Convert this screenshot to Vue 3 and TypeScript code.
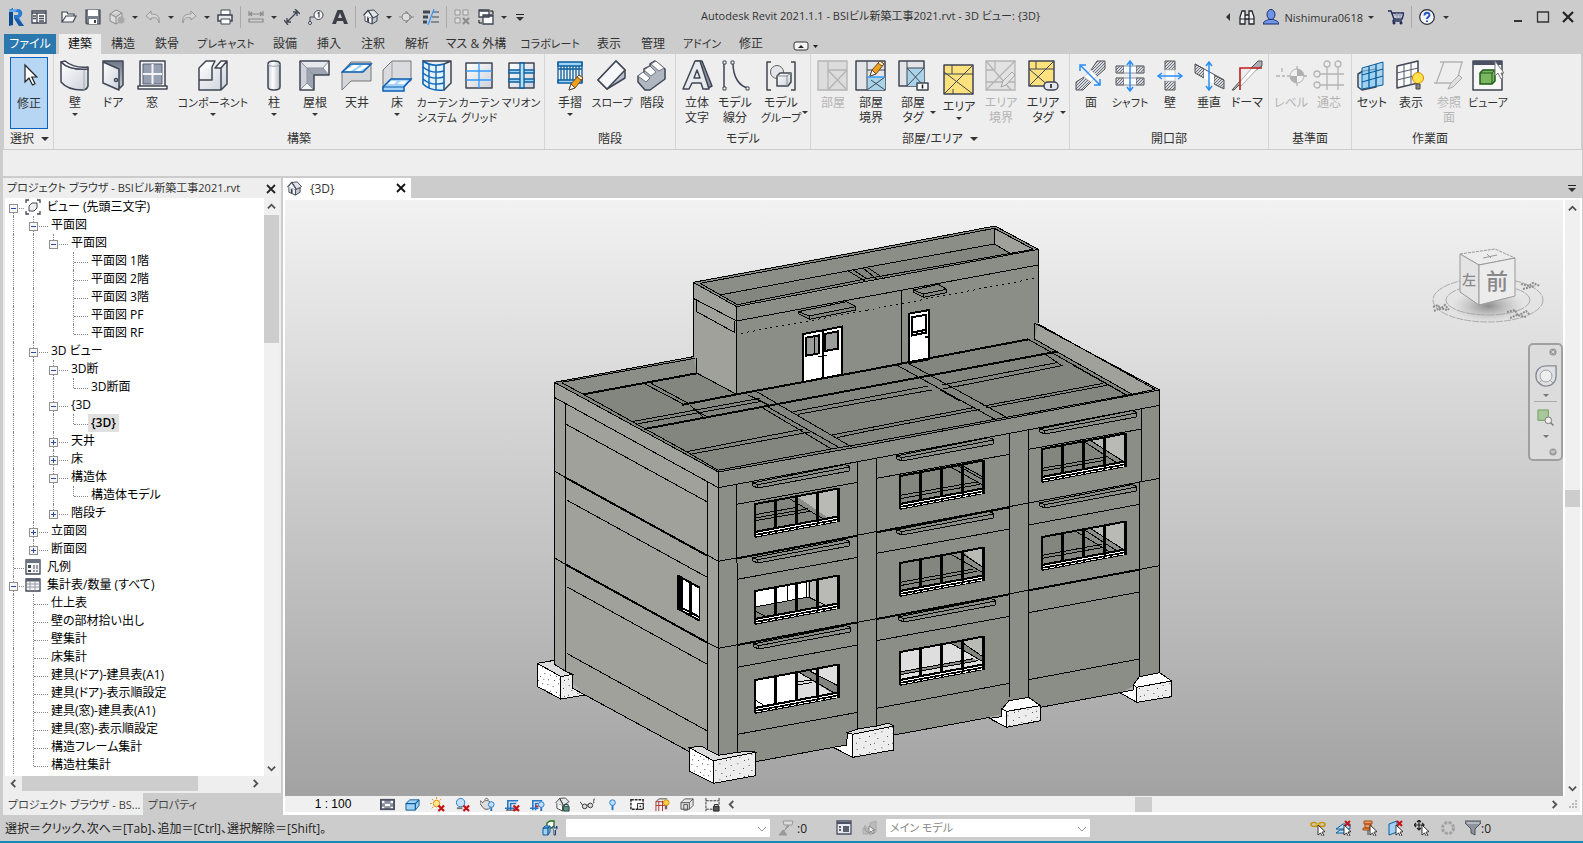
<script setup lang="ts">
import { ref } from 'vue'

interface Tool {
  lines: string[]
  icon: string
  size: string
  arrow?: 'below' | 'side'
  disabled?: boolean
  low?: boolean
}
interface Panel {
  title: string
  pad: string
  more?: boolean
  tools: Tool[]
}
interface Row {
  guides: string
  text: string
  icon?: string
  selected?: boolean
}

const O = 'stroke="#3f4654" stroke-width="1.5" stroke-linejoin="round"'
const G = 'stroke="#b4b4b4" stroke-width="1.3" fill="none"'
const B = 'stroke="#0b5f9e" stroke-width="1.3" fill="none"'
const pencil =
  '<path d="M15 30l2-6L25 15l4 3-8 10z" fill="#f0a020" stroke="#7a4a12"/><path d="M15 30l2-6 4 4z" fill="#fff" stroke="#5a4a3a"/><path d="M25 15l4 3-2 2-4-3z" fill="#fff3d0" stroke="#7a4a12"/>'
const cross =
  '<path d="M9 9l6 6M15 9l-6 6" stroke="#c41418" stroke-width="2.4"/>'
const cursor =
  '<path d="M8 5v10l2.500-2 2 3.500 1.500-1-2-3.300 3-.6z" fill="#fff" stroke="#222" stroke-width=".9"/>'
const bulb =
  '<circle cx="12" cy="8" r="3" fill="#bfe0ff" stroke="#2277c8"/><path d="M12 11v4" stroke="#2277c8" stroke-width="2"/>'

const icons: Record<string, string> = {
  arrow: `<path d="M12 4v17l4-4 3.500 7 2.500-1.200-3.200-6.800h5z" fill="#fff" stroke="#222" stroke-width="1.200"/>`,
  wall: `<path d="M2 2c6 6 15 8 27 7v17c-1 4-4 4-6 4-9 0-16-2-21-8z" fill="url(#gw)" ${O}/><path d="M2 2l4-1c6 5 13 7 23 6v2c-12 1-21-1-27-7z" fill="#f8f8f8" ${O}/><path d="M25 10v20" fill="none" stroke="#a4a9b3"/>`,
  door: `<path d="M6 1h20v24l-3 3z" fill="url(#gd)" ${O}/><path d="M6 2l16 7v21L6 23z" fill="url(#gw)" ${O}/><circle cx="19" cy="20" r="1.500" fill="#fff" ${O}/>`,
  window: `<path d="M4 1h25v26H4z" fill="#f2f2f4" ${O}/><path d="M7 4h19v20H7z" fill="#97a0b2" stroke="#596172"/><path d="M16.500 4v20M7 14h19" stroke="#f4f4f6" stroke-width="2"/><path d="M2 26h29v3H2z" fill="#fff" ${O}/>`,
  component: `<path d="M2 8l7-7h21v23l-6 6H2z" fill="url(#gw)"/><path d="M2 8l7-7h9l-3 7zM17 8l7-7h6l-6 7z" fill="#fafafa"/><path d="M2 8l7-7h9l-3 6v13H2zM2 20v10h22V8h-6l6-7h6v23l-6 6M24 8l6-7" fill="none" ${O}/>`,
  column: `<path d="M10 4c0-4 12-4 12 0v23c0 4-12 4-12 0z" fill="url(#gc)" ${O}/><path d="M10 4c0 3 12 3 12 0" fill="none" stroke="#9aa1ad"/>`,
  roof: `<path d="M1 1h29v14H15v15H1z" fill="#9ea4b0"/><path d="M1 1h29l-6 7H8z" fill="#e6e8ec"/><path d="M1 1l7 7v15l-7 7z" fill="#cdd1d8"/><path d="M24 8l6-7v14zM8 23l7 7H1z" fill="#f4f5f7"/><path d="M1 1l7 7h16l6-7M24 8l6 7M8 8v15l-7 7M8 23l7 7M8 8l7 7" fill="none" stroke="#8d93a0"/><path d="M1 1h29v14H15v15H1z" fill="none" ${O}/>`,
  ceiling: `<path d="M1 12v18l9-9h20V2H10z" fill="#d4d6da" stroke="#777"/><path d="M10 4h20l-8 8H1z" fill="#a5d4fb" stroke="#0b5fb0" stroke-width="1.500"/><path d="M12 5h6l-3 3H9zM22 5h6l-4 3h-5zM8 8h6l-4 3H4zM18 8h5l-4 3h-5z" fill="#fff"/>`,
  floor: `<path d="M2 10l9-9h19v20H11l-9 8z" fill="#d9dbdf" stroke="#777"/><path d="M11 1v18" stroke="#999"/><path d="M2 27l8-8h20l-7 8v4H2z" fill="#a5d4fb" stroke="#0b5fb0" stroke-width="1.500"/><path d="M10 21h6l-3 3H7zM20 21h6l-3 3h-7z" fill="#fff"/><path d="M2 27h21l7-8" fill="none" stroke="#0b5fb0"/>`,
  curtain: `<path d="M2 1c7 5 14 5 21 3v26C14 31 7 29 2 24z" fill="#e3f1fb" stroke="#0b64b4" stroke-width="1.600"/><path d="M8 4v24M15 5v25M2 7c7 6 14 6 21 4M2 13c7 6 14 6 21 4M2 19c7 6 14 6 21 4" fill="none" stroke="#0b64b4" stroke-width="1.400"/><path d="M2 1h28L23 4M30 1v22l-7 7" fill="none" ${O}/>`,
  grid: `<path d="M3 3h26v25H3z" fill="url(#gw)" ${O}/><path d="M16 3v25M3 11h26M3 20h26" stroke="#3399ff" stroke-width="1.300"/>`,
  mullion: `<path d="M4 3h25v25H4z" fill="url(#gw)" ${O}/><path d="M4 10h25v3H4zM4 19h25v3H4z" fill="#9fd3f7" ${B}/><path d="M15 3h4v25h-4z" fill="#b8e0fb" ${B}/>`,
  rail: `<path d="M4 2h24v4H4zM4 20h24v3H4z" fill="#9fd3f7" ${B}/><path d="M4 9h24M7 6v14M10 6v14M13 6v14M16 6v14M19 6v14M22 6v14M25 6v14M28 2v21M4 2v21" ${B}/>${pencil}`,
  slope: `<path d="M2 20L20 1l9 9v8L11 29z" fill="#b9bec8" ${O}/><path d="M2 20L20 1l9 9-18 19z" fill="#f6f7f8" ${O}/>`,
  stairs: `<path d="M2 16l6-4v-3l6-3V4l5-3 10 8v10L14 30h-5l-7-8z" fill="#b1b7c1" ${O}/><path d="M2 16l5-4 7 6-4 4zM8 10l6-4 6 6-5 4zM15 4l5-3 8 7-5 3z" fill="#fff" stroke="#6f7582"/>`,
  text3d: `<path d="M15 1h6l10 25-6 3z" fill="#8d93a1" ${O}/><path d="M14 1h5l9 28h-6l-2-6h-9l-3 6H2zM16 10l-3 8h6z" fill="#e8eaee" ${O}/>`,
  line: `<path d="M5 3v26M14 3c0 14 6 23 15 25" fill="none" ${O}/><path d="M4 1h3v3H4zM4 27h3v3H4zM12 1h3v3h-3zM27 27h3v3h-3z" fill="#fff" stroke="#3f4654"/>`,
  group: `<path d="M6 2H2v28h4M26 2h4v28h-4" fill="none" ${O}/><circle cx="12" cy="12" r="6.500" fill="#e3e5e9" stroke="#666"/><path d="M12 16l3-3h11v9l-3 4H12z" fill="url(#gw)" ${O}/><path d="M12 16h10l4-3M22 16v10" fill="none" stroke="#888"/>`,
  room: `<path d="M1 1h29v29H1z" fill="#dcdcdc" ${G}/><path d="M11 1v29M11 10h19M11 10l19 20M30 10L11 30" ${G}/>`,
  boundary: `<path d="M1 1h29v29H1z" fill="#e2e4e8" ${O}/><path d="M12 17h18v13H12z" fill="#a9d4e8"/><path d="M12 1v29M12 10h18M12 30l18-13M16 20l14 10" stroke="#3f4654" fill="none"/><path d="M12 17h18" stroke="#3399ff" stroke-width="1.500"/><g transform="translate(0 -14)">${pencil}</g>`,
  roomtag: `<path d="M2 1h25v25H2z" fill="#e2e4e8" ${O}/><path d="M10 8h17v18H10z" fill="#a9d4e8"/><path d="M10 1v25M10 8h17M10 8l17 18M27 8L10 26" stroke="#3f4654" fill="none"/><path d="M20 23h11v7H20z" fill="#fff" ${O}/><path d="M25.500 24.500v4" stroke="#111" stroke-width="1.500"/>`,
  area: `<path d="M1 1h29v29H1z" fill="#fde17c" ${O}/><path d="M1 10h29M9 1v9M1 8l29 22M30 1L1 30M10 30v-5" stroke="#3f4654" fill="none"/>`,
  areabound: `<path d="M1 1h29v29H1z" fill="#e2e2e2" ${G}/><path d="M10 1v9M1 10h9M1 1l25 29M30 1L1 30M1 22h29" ${G}/><path d="M16 27l2-6 9-9 3 3-9 10z" fill="#e4e4e4" stroke="#a5a5a5"/>`,
  areatag: `<path d="M2 1h25v25H2z" fill="#fde17c" ${O}/><path d="M2 9h25M9 1v8M2 9l20 17M27 1L2 26" stroke="#3f4654" fill="none"/><rect x="17" y="22" width="14" height="8" rx="4" fill="#e4e6ee" ${O}/><path d="M24 24v4" stroke="#111" stroke-width="1.500"/>`,
  openface: `<path d="M1 22l8-5 7 5-8 8H1zM16 10l6-9h8v8l-8 7z" fill="url(#ht)" stroke="#555"/><path d="M9 17l7-7 6 6-6 6z" fill="#fff" stroke="#ccc"/><path d="M6 6l19 19M5 11V5h6M25 19v6h-6" fill="none" stroke="#2b8ff5" stroke-width="1.500"/>`,
  shaft: `<path d="M2 6h8v7H2zM22 6h8v7h-8zM2 18h8v7H2zM22 18h8v7h-8z" fill="url(#ht)" stroke="#555"/><path d="M10 6h12v7H10zM10 18h12v7H10z" fill="#fff"/><path d="M2 6h28M2 13h28M2 18h28M2 25h28" stroke="#8b9099"/><path d="M16 2v28M13 5l3-4 3 4M13 27l3 4 3-4" fill="none" stroke="#2b8ff5" stroke-width="1.500"/>`,
  openwall: `<path d="M11 1h10v9H11zM11 21h10v9H11z" fill="url(#ht)" stroke="#555"/><path d="M11 10h10v11H11z" fill="#fff" stroke="#ccc"/><path d="M5 16h22M8 13l-4 3 4 3M24 13l4 3-4 3" fill="none" stroke="#2b8ff5" stroke-width="1.500"/>`,
  vertical: `<path d="M2 4l9 5v9l-9-5zM21 15l10 5v9l-10-5z" fill="url(#ht)" stroke="#555"/><path d="M11 9l10 6v9l-10-6z" fill="#fff"/><path d="M2 4l29 16" stroke="#555"/><path d="M16 3v26M13 6l3-4 3 4M13 26l3 4 3-4" fill="none" stroke="#2b8ff5" stroke-width="1.500"/>`,
  dormer: `<path d="M1 30l8-9v3l-6 6zM20 8l7-7h4v5l-6 4z" fill="#a8adb7" stroke="#555"/><path d="M7 24L21 8h6L10 26z" fill="#fff" stroke="#aaa"/><path d="M9 30V8h22" fill="none" stroke="#c01c1c" stroke-width="1.600"/>`,
  level: `<path d="M1 16h4M7 16h3M7 8v4M12 16h20M22 6v20" ${G}/><circle cx="22" cy="16" r="7" fill="#f0f0f0" stroke="#b4b4b4"/><path d="M22 9v7h7a7 7 0 0 0-7-7M22 23v-7h-7a7 7 0 0 0 7 7" fill="#b0b0b0"/>`,
  gridline: `<circle cx="14" cy="4" r="3" ${G}/><circle cx="25" cy="4" r="3" ${G}/><circle cx="4" cy="14" r="3" ${G}/><circle cx="4" cy="25" r="3" ${G}/><path d="M14 7v23M25 7v23M7 14h24M7 25h24" ${G}/>`,
  set: `<path d="M2 14l5-3 13-2v18L6 30 2 27z" fill="#c3e3f6" ${O}/><path d="M6 8l21-6v23L6 29z" fill="#8fcbf0" fill-opacity=".7" stroke="#0b5f9e"/><path d="M6 15l21-6M6 22l21-6M13 6v21M20 4v22" ${B}/>`,
  show: `<path d="M2 6l21-5v22L2 28z" fill="#fafafa" ${O}/><path d="M2 13l21-5M2 20l21-5M9 4v22M16 3v22" stroke="#555c69" fill="none"/><circle cx="23" cy="18" r="5.500" fill="#ffe24a" stroke="#d78b10"/><path d="M21 24h4v5h-4z" fill="#888" stroke="#444"/>`,
  refplane: `<path d="M3 24L11 2M1 23h22M23 24l6-22M7 2h23" ${G}/><path d="M15 29l3-6 8-8 3 3-9 9z" fill="#e0e0e0" stroke="#aaa"/>`,
  viewer: `<path d="M1 1h29v29H1z" fill="#f7f7f7" ${O}/><path d="M1 1h29v4H1z" fill="#4b5164"/><path d="M8 13l3-3h12v11l-3 3H8z" fill="#7cb660" stroke="#1d5c1a" stroke-width="1.500"/><path d="M8 13h12l3-3M20 13v11" fill="none" stroke="#1d5c1a"/><path d="M23 1v15l3-3 3 6 2-1-2-5h3z" fill="#fff" stroke="#777"/>`,
  // small toolbar glyphs, 16 units square
  list: `<path d="M1 2h14v12H1z" fill="#fff" stroke="#3f4654" stroke-width="1.300"/><path d="M1 4h14M6 4v10M8 7h5M8 9.500h5M8 12h5M2 7h3M2 9.500h3" stroke="#3f4654" stroke-width="1.300"/>`,
  open: `<path d="M1 13V3h5l1 2h6v2M1 13l4-6h10l-3 6z" fill="#f6f6f6" stroke="#3f4654" stroke-width="1.200"/>`,
  save: `<path d="M1 1h14v14H2l-1-1z" fill="#79818f" stroke="#3f4654" stroke-width="1.200"/><path d="M3 1h10v6H3zM4 10h8v5H4z" fill="#fff"/><path d="M9 11h2v3H9z" fill="#444"/>`,
  sync: `<path d="M1 5l6-4 6 3v7l-6 4-6-3zM1 5l6 3 6-4M7 8v7" fill="#dcdcdc" stroke="#8a8a8a"/><circle cx="12" cy="11" r="3.500" fill="#a9a9a9"/>`,
  undo: `<path d="M6 2L1 7l5 4V9c5-1 7 0 8 5 1-6-1-9-8-9z" fill="#d6d6d6" stroke="#979797"/>`,
  redo: `<path d="M10 2l5 5-5 4V9C5 8 3 9 2 14 1 8 3 5 10 5z" fill="#d6d6d6" stroke="#979797"/>`,
  print: `<path d="M4 1h9v5H4z" fill="#fff" stroke="#3f4654"/><path d="M1 6h14v6H1z" fill="#e8e8ea" stroke="#3f4654" stroke-width="1.500"/><path d="M4 10h9v5H4z" fill="#fff" stroke="#3f4654"/>`,
  ruler: `<path d="M1 5h14M1 2v5M15 2v5M4 3L2 5l2 2M12 3l2 2-2 2M1 10h14v3H1z" fill="none" stroke="#8a8a8a" stroke-width="1.200"/>`,
  dim: `<path d="M2 14L14 2M3 9v4h4M9 3h4v4M0 11l4 5M11 0l5 5" fill="none" stroke="#3f4654" stroke-width="1.300"/>`,
  tag: `<path d="M2 13V8h4" fill="none" stroke="#3f4654"/><circle cx="2" cy="14" r="1.500" fill="#fff" stroke="#3f4654"/><circle cx="10.500" cy="6" r="4.500" fill="#f5f5f5" stroke="#3f4654"/><path d="M9.500 4.500l1.500-1v5" fill="none" stroke="#3f4654" stroke-width="1.200"/>`,
  letter: `<path d="M5.500 1h5L16 15h-4l-1-3H5l-1 3H0zM8 4L6 9h4z" fill="#3b3f47"/>`,
  home: `<path d="M9 9l5-2v5l-5 3z" fill="#c3c8d1" stroke="#3f4654"/><path d="M5 1.500l6-.5 4.500 5L10 9z" fill="#dfe2e7" stroke="#3f4654"/><path d="M2 6v6l7 3V9z" fill="#f6f6f6" stroke="#3f4654"/><path d="M.5 6.500l4.500-5L10 9" fill="#f6f6f6" stroke="#3f4654" stroke-width="1.300"/><path d="M4 8l2 1v4.500L4 12.500z" fill="#3f4654"/>`,
  section: `<path d="M7 2l6 6-6 6z" fill="#aaa" stroke="#8c8c8c"/><circle cx="7" cy="8" r="4" fill="#ddd" stroke="#8c8c8c"/><path d="M0 8h3M13 8h2" stroke="#8c8c8c"/>`,
  thin: `<path d="M0 3h7M0 8h5M0 13h4" stroke="#3f4654" stroke-width="3"/><path d="M10 3h6M9 8h7M8 13h8" stroke="#3f4654"/><path d="M11 0L5 16" stroke="#3399ff" stroke-width="1.300"/>`,
  closehidden: `<path d="M1 1h5v5H1zM9 1h5v5H9zM1 9h5v5H1z" fill="#dedede" stroke="#979797"/><path d="M9 9l6 6M15 9l-6 6" stroke="#8a8a8a" stroke-width="2"/>`,
  windows: `<path d="M1 1h10v7H1zM5 6h10v9H5z" fill="#fafafa" stroke="#3f4654" stroke-width="1.300"/><path d="M1 2h10M5 7h10" stroke="#3f4654" stroke-width="1.500"/><path d="M12 2h3v3M1 11v3h3" fill="none" stroke="#111"/>`,
  binocular: `<path d="M1 15V8l2-6h3v13zM15 15V8l-2-6h-3v13zM6 6h4v4H6z" fill="#f0f0f0" stroke="#24262b" stroke-width="1.300"/><path d="M1 10h5M10 10h5" stroke="#24262b"/>`,
  user: `<path d="M0 15c1-4 4-3 6-5h4c2 2 5 1 6 5z" fill="#6d95e8" stroke="#1d2b66"/><ellipse cx="8" cy="5.500" rx="4" ry="5" fill="#6d95e8" stroke="#1d2b66"/>`,
  cart: `<path d="M0 2h3l3 8h8l2-6H4M6 10l-1 2h9" fill="none" stroke="#1e2a58" stroke-width="1.400"/><path d="M6 6h9M9 4v6M12 4v6" stroke="#8b93b0"/><circle cx="6" cy="14" r="1.500" fill="#1e2a58"/><circle cx="13" cy="14" r="1.500" fill="#1e2a58"/>`,
  help: `<circle cx="8" cy="8" r="7.300" fill="#f2f4f8" stroke="#262a33" stroke-width="1.200"/><path d="M5.500 6.500c0-3.500 5-3.500 5-.5 0 2-2.500 2-2.500 4M8 11.500v1.500" fill="none" stroke="#2457c5" stroke-width="2"/>`,
  views: `<path d="M4 1H1v3M12 1h3v3M4 15H1v-3M12 15h3v-3" fill="none" stroke="#3f4654" stroke-width="1.300"/><path d="M4 7l3-3h5v5l-3 3H4z" fill="#eee" stroke="#3f4654"/>`,
  legend: `<path d="M1 1h14v14H1z" fill="#f4f4f4" stroke="#3f4654" stroke-width="1.300"/><path d="M1 2.500h14" stroke="#6c7484" stroke-width="3"/><path d="M3 6h3v3H3zM3 11h3v2H3z" fill="#3f4654"/><path d="M8 7h6M8 9h6M8 12h6" stroke="#3f4654" stroke-dasharray="2 1"/>`,
  schedule: `<path d="M1 2h14v12H1z" fill="#f7f7f7" stroke="#3f4654" stroke-width="1.300"/><path d="M1 3h14" stroke="#596172" stroke-width="3"/><path d="M1 7h14M1 10h14M5 4v10M10 4v10" stroke="#9299a5"/>`,
  checker: `<path d="M0 2h16v12H0z" fill="#4b5164"/><path d="M2 4h3v3H2zM11 4h3v3h-3zM5 7h6v3H5zM2 10h3v2H2zM11 10h3v2h-3z" fill="#fff"/><path d="M5 4h6v3H5zM2 7h3v3H2zM11 7h3v3h-3zM5 10h6v2H5z" fill="#8b919f"/>`,
  box: `<path d="M1 7l4-4h10v6l-4 5H1z" fill="#a3d1f4" stroke="#0b5f9e"/><path d="M1 7h10l4-4M11 7v7" ${B}/>`,
  sun: `<circle cx="7" cy="7" r="3.500" fill="#ffe88a" stroke="#dd8a10"/><path d="M7 0v2M0 7h2M2 2l1.500 1.500M2 12l1.500-1.500M12 2l-1.500 1.500" stroke="#dd8a10"/>${cross}`,
  shadow: `<circle cx="6" cy="6" r="4.500" fill="#c3e2fb" stroke="#2277c8"/><path d="M2 12h6" stroke="#777" stroke-width="2"/>${cross}`,
  teapot: `<path d="M0 4l3 2c1-3 7-3 8 0v5l-2 2H5l-2-2-3-4zM5 3l2-2 2 2" fill="#ddd" stroke="#555"/>${bulb}`,
  crop: `<path d="M3 14V4h11M0 12h10M6 14V7h6" fill="none" stroke="#2277c8" stroke-width="1.700"/><path d="M1 14h13" stroke="#444"/>${cross}`,
  cropshow: `<path d="M3 14V4h10M0 12h9M6 14V7h3" fill="none" stroke="#2277c8" stroke-width="1.700"/><path d="M6 10h3" stroke="#c22" stroke-width="2"/>${bulb}`,
  lock: `<path d="M2 6v6l6 3V9z" fill="#f6f6f6" stroke="#444"/><path d="M5 1.500l6-.5 4 4-6 4zM.5 6.500l4.500-5L9 9" fill="#e5e8ec" stroke="#444"/><path d="M9 10h6v5H9z" fill="#5f9184" stroke="#244"/><path d="M10 10V8h4v2" fill="none" stroke="#244"/>`,
  glasses: `<path d="M0 5l3 4M16 2c-3 0 0 4-2 5M7 9l2-1" fill="none" stroke="#333"/><circle cx="5" cy="10" r="2.500" fill="#ddd" stroke="#333"/><circle cx="11" cy="9" r="2.500" fill="#ddd" stroke="#333"/>`,
  bulb: `<circle cx="8" cy="6" r="3" fill="#bfe0ff" stroke="#2277c8"/><path d="M8 9v5" stroke="#2277c8" stroke-width="2"/>`,
  chip: `<path d="M1 3h13v10H1z" fill="#fff" stroke="#222" stroke-dasharray="3 1" stroke-width="1.500"/><path d="M8 7h6v6H8z" fill="#fff" stroke="#222"/><circle cx="11" cy="10" r="1" fill="#222"/>`,
  frame: `<path d="M1 15V5h10v8M4 4v11M8 4v11M1 9h10" stroke="#a33" fill="none"/><path d="M1 5l3-3h9" stroke="#444" fill="none"/><circle cx="12" cy="6" r="3" fill="#ffd24a" stroke="#d78b10"/><path d="M12 9v4" stroke="#666" stroke-width="2"/>`,
  boxes: `<path d="M1 6l4-4h9v7l-4 4" fill="#e6e6e6" stroke="#555"/><path d="M1 6h9v7H1zM10 6l4-4M4 8h4v6H4z" fill="#ddd" stroke="#555"/>`,
  dimlock: `<path d="M1 1v14M15 1v8M1 4h14M1 13h7" stroke="#333" fill="none" stroke-dasharray="3 1"/><path d="M9 10h6v5H9z" fill="#555" stroke="#222"/><path d="M10 10V8h4v2" fill="none" stroke="#222"/>`,
  workset: `<path d="M5 3l3-2h4v5L9 8H5z" fill="#fff" stroke="#1d6a1a" stroke-width="1.300"/><path d="M1 8l2-2h5v6l-2 3H1z" fill="#a3d1f4" stroke="#0b5f9e"/><path d="M1 8h5l2-2M6 8v7" ${B}/><path d="M12 6c-2 1-1 3 0 4v5h1.500v-5c2-1 2-3 1-4v2H12z" fill="#fff" stroke="#1f3f73"/>`,
  funnelgray: `<path d="M5 1h10l-1 4H6z" fill="#ddd" stroke="#999"/><path d="M9 5l2 1-5 5M1 15l4-5 4 5z" fill="#999" stroke="#999"/>`,
  options: `<path d="M1 1h14v13H1z" fill="#e7e9ee" stroke="#4b5164" stroke-width="1.300"/><path d="M1 3h14" stroke="#4b5164" stroke-width="2"/><path d="M7 7h6M7 9h6M7 11h6M3 7h2M3 10h2" stroke="#2c3344" stroke-width="1.300"/>`,
  grayopt: `<path d="M1 8h5v6H1zM8 3l6-2v11l-6 3z" fill="#bbb" stroke="#aaa"/><path d="M3 5v5l5 4" fill="none" stroke="#999"/><path d="M7 6v7l2-2 2 3 1-1-1.500-3H13z" fill="#f0f0f0" stroke="#888"/>`,
  link: `<ellipse cx="4" cy="4.500" rx="3" ry="2" fill="none" stroke="#c8940c" stroke-width="1.700"/><ellipse cx="12" cy="4.500" rx="3" ry="2" fill="none" stroke="#c8940c" stroke-width="1.700"/><path d="M5 4.500h6" stroke="#e8b92c" stroke-width="1.500"/>${cursor}`,
  underlay: `<path d="M0 9l7-5h7v5zM0 13l4-3h9v3z" fill="#b9dcf8" stroke="#0b5f9e"/><path d="M9 1l5 5M14 1L9 6" stroke="#c41418" stroke-width="2"/>${cursor}`,
  pin: `<path d="M2 1h8v3H2zM3 4h6v4H3zM1 8h10v2H1z" fill="#f09a5c" stroke="#a54c15"/><path d="M6 10v5" stroke="#444"/>${cursor}`,
  face: `<path d="M1 4l8-3v11l-8 3z" fill="#a3d1f4" stroke="#0b5f9e"/><path d="M9 1l5 5M14 1L9 6" stroke="#c41418" stroke-width="2"/>${cursor}`,
  drag: `<path d="M5 0v10M0 5h10M3 2l2-2 2 2M3 8l2 2 2-2M2 3L0 5l2 2M8 3l2 2-2 2" fill="none" stroke="#222" stroke-width="1.200"/>${cursor}`,
  spinner: `<circle cx="8" cy="8" r="5.500" fill="none" stroke="#a2a2a2" stroke-width="3" stroke-dasharray="3 1.300"/>`,
  funnel: `<path d="M0 1h16v2l-6 6v6l-4-2V9L0 3z" fill="#8d929c" stroke="#50555f"/><path d="M2 3h12" stroke="#dfe1e6"/>`,
}

const quick = [
  { icon: 'list', name: 'ホーム' },
  { icon: 'open', name: '開く' },
  { icon: 'save', name: '保存' },
  { icon: 'sync', name: '同期', menu: true },
  { icon: 'undo', name: '元に戻す', menu: true },
  { icon: 'redo', name: 'やり直し', menu: true },
  { icon: 'print', name: '印刷', rule: true },
  { icon: 'ruler', name: '計測', menu: true },
  { icon: 'dim', name: '寸法' },
  { icon: 'tag', name: 'タグ' },
  { icon: 'letter', name: '文字', rule: true },
  { icon: 'home', name: '既定の 3D ビュー', menu: true },
  { icon: 'section', name: '断面' },
  { icon: 'thin', name: '細線', rule: true },
  { icon: 'closehidden', name: '非アクティブビューを閉じる' },
  { icon: 'windows', name: 'ウィンドウ切り替え', menu: true },
]

const tabs = [
  { t: 'ファイル', c: 'file' },
  { t: '建築', c: 'active' },
  { t: '構造', c: '' },
  { t: '鉄骨', c: '' },
  { t: 'プレキャスト', c: 'w74 tight' },
  { t: '設備', c: '' },
  { t: '挿入', c: '' },
  { t: '注釈', c: '' },
  { t: '解析', c: '' },
  { t: 'マス & 外構', c: 'w74' },
  { t: 'コラボレート', c: 'w74 tight' },
  { t: '表示', c: '' },
  { t: '管理', c: '' },
  { t: 'アドイン', c: 'w54 tight' },
  { t: '修正', c: '' },
]

const panels: Panel[] = [
  {
    title: '構築', pad: 'p2',
    tools: [
      { lines: ['壁'], icon: 'wall', size: 's38', arrow: 'below' },
      { lines: ['ドア'], icon: 'door', size: 's38' },
      { lines: ['窓'], icon: 'window', size: 's40' },
      { lines: ['コンポーネント'], icon: 'component', size: 's82', arrow: 'below' },
      { lines: ['柱'], icon: 'column', size: 's40', arrow: 'below' },
      { lines: ['屋根'], icon: 'roof', size: 's42', arrow: 'below' },
      { lines: ['天井'], icon: 'ceiling', size: 's42' },
      { lines: ['床'], icon: 'floor', size: 's38', arrow: 'below' },
      { lines: ['カーテン', 'システム'], icon: 'curtain', size: 's42' },
      { lines: ['カーテン', 'グリッド'], icon: 'grid', size: 's42' },
      { lines: ['マリオン'], icon: 'mullion', size: 's42' },
    ],
  },
  {
    title: '階段', pad: 'p4',
    tools: [
      { lines: ['手摺'], icon: 'rail', size: 's42', arrow: 'below' },
      { lines: ['スロープ'], icon: 'slope', size: 's42' },
      { lines: ['階段'], icon: 'stairs', size: 's38' },
    ],
  },
  {
    title: 'モデル', pad: 'p2',
    tools: [
      { lines: ['立体', '文字'], icon: 'text3d', size: 's38' },
      { lines: ['モデル', '線分'], icon: 'line', size: 's38' },
      { lines: ['モデル', 'グループ'], icon: 'group', size: 's54', arrow: 'side' },
    ],
  },
  {
    title: '部屋/エリア', pad: 'p3', more: true,
    tools: [
      { lines: ['部屋'], icon: 'room', size: 's38', disabled: true },
      { lines: ['部屋', '境界'], icon: 'boundary', size: 's38' },
      { lines: ['部屋', 'タグ'], icon: 'roomtag', size: 's46', arrow: 'side' },
      { lines: ['エリア'], icon: 'area', size: 's46', arrow: 'below', low: true },
      { lines: ['エリア', '境界'], icon: 'areabound', size: 's38', disabled: true },
      { lines: ['エリア', 'タグ'], icon: 'areatag', size: 's46', arrow: 'side' },
    ],
  },
  {
    title: '開口部', pad: 'p2',
    tools: [
      { lines: ['面'], icon: 'openface', size: 's38' },
      { lines: ['シャフト'], icon: 'shaft', size: 's40' },
      { lines: ['壁'], icon: 'openwall', size: 's40' },
      { lines: ['垂直'], icon: 'vertical', size: 's38' },
      { lines: ['ドーマ'], icon: 'dormer', size: 's38' },
    ],
  },
  {
    title: '基準面', pad: 'p3',
    tools: [
      { lines: ['レベル'], icon: 'level', size: 's38', disabled: true },
      { lines: ['通芯'], icon: 'gridline', size: 's38', disabled: true },
    ],
  },
  {
    title: '作業面', pad: 'p0',
    tools: [
      { lines: ['セット'], icon: 'set', size: 's40' },
      { lines: ['表示'], icon: 'show', size: 's38' },
      { lines: ['参照', '面'], icon: 'refplane', size: 's38', disabled: true },
      { lines: ['ビューア'], icon: 'viewer', size: 's40' },
    ],
  },
]

// One guide character per indent column:
// | pass, T tee, L elbow, r/m/e minus box, p/q plus box
const rows: Row[] = [
  { guides: 'r', text: 'ビュー (先頭三文字)', icon: 'views' },
  { guides: '|m', text: '平面図' },
  { guides: '||e', text: '平面図' },
  { guides: '|| T', text: '平面図 1階' },
  { guides: '|| T', text: '平面図 2階' },
  { guides: '|| T', text: '平面図 3階' },
  { guides: '|| T', text: '平面図 PF' },
  { guides: '|| L', text: '平面図 RF' },
  { guides: '|m', text: '3D ビュー' },
  { guides: '||m', text: '3D断' },
  { guides: '|||L', text: '3D断面' },
  { guides: '||m', text: '{3D' },
  { guides: '|||L', text: '{3D}', selected: true },
  { guides: '||p', text: '天井' },
  { guides: '||p', text: '床' },
  { guides: '||m', text: '構造体' },
  { guides: '|||L', text: '構造体モデル' },
  { guides: '||q', text: '階段チ' },
  { guides: '|p', text: '立面図' },
  { guides: '|q', text: '断面図' },
  { guides: 'T', text: '凡例', icon: 'legend' },
  { guides: 'm', text: '集計表/数量 (すべて)', icon: 'schedule' },
  { guides: '|T', text: '仕上表' },
  { guides: '|T', text: '壁の部材拾い出し' },
  { guides: '|T', text: '壁集計' },
  { guides: '|T', text: '床集計' },
  { guides: '|T', text: '建具(ドア)-建具表(A1)' },
  { guides: '|T', text: '建具(ドア)-表示順設定' },
  { guides: '|T', text: '建具(窓)-建具表(A1)' },
  { guides: '|T', text: '建具(窓)-表示順設定' },
  { guides: '|T', text: '構造フレーム集計' },
  { guides: '|L', text: '構造柱集計' },
]
const guideClass: Record<string, string> = {
  ' ': '', '|': 'up down', T: 'up down out', L: 'up out',
  r: 'down out', m: 'up down out', e: 'up out', p: 'up down out', q: 'up out',
}
const isBox = (c: string) => 'rmepq'.includes(c)

const viewTools = ['checker', 'box', 'sun', 'shadow', 'teapot', 'crop', 'cropshow', 'lock', 'glasses', 'bulb', 'chip', 'frame', 'boxes', 'dimlock']
const selectTools = ['link', 'underlay', 'pin', 'face', 'drag', 'spinner']

// Model windows: origin of the top-left corner and what shows behind the glass
const glass = [
  { x: 755, y: 504, base: '#83867e', inner: [['M125-23L254-47V36L220 42z', '#b9bab6'], ['M100-18L125-23 220 42 180 30z', '#8b8e86']], lines: 'M0 32L125 10M0 42L160 14M0 50L165 22M100-18L205 45' },
  { x: 900, y: 476, base: '#83867e', inner: [['M175-33L254-47V-5z', '#8b8e86']], lines: 'M0 58L230 18M0 68L240 25M150-28L254 30M172-32L254 14M180-35L254 6' },
  { x: 1042, y: 449, base: '#83867e', inner: [['M135-25L254-47V36L225 42z', '#b9bab6'], ['M125-23L145-26 250 38 225 42z', '#8b8e86']], lines: 'M0 58L185 25M0 66L190 34M125-23L225 42M145-26L245 38' },
  { x: 755, y: 591, base: '#ffffff', inner: [['M0 48L160 18 210 44 0 84z', '#83867e'], ['M160-30L254-47V35L200 45 160 18z', '#b9bab6']], lines: 'M0 48L160 18L210 42M98-18V28M155-28V18M165-30V20M0 60L35 78' },
  { x: 900, y: 563, base: '#83867e', inner: [['M190-35L254-47V20z', '#b9bab6'], ['M150-28L190-35 254 20 254 32z', '#8b8e86']], lines: 'M0 58L220 18M0 68L230 25M150-28L254 32M180-33L254 16' },
  { x: 1042, y: 537, base: '#83867e', inner: [['M135-25L254-47V36L235 40z', '#b9bab6'], ['M125-23L145-26 245 38 205 46 100-18z', '#8b8e86']], lines: 'M0 55L180 22M0 64L190 30M100-18L205 46M125-23L225 42M145-26L245 38' },
  { x: 755, y: 680, base: '#ffffff', inner: [['M125-23L254-47V44L125 60z', '#dedede'], ['M130-24L160-29 254 18V32L235 42z', '#83867e']], lines: 'M130-24L240 40M160-29L254 20M130 5L170 0M130 14L170 8M0 60L30 78' },
  { x: 900, y: 652, base: '#dedede', inner: [['M180-33L254-47V15z', '#b9bab6'], ['M150-28L180-33 254 18V32z', '#83867e'], ['M0 60L220 20 230 26 0 68z', '#8b8e86']], lines: 'M0 60L220 20M0 68L235 26M150-28L254 32M180-33L254 18' },
]
const ledges = [[752, 483], [896, 456], [1039, 429], [752, 558], [896, 530], [1039, 503], [753, 644], [898, 617]]

const scaleText = ref('1 : 100')
</script>

<template>
  <div class="app">
    <svg class="defs" aria-hidden="true">
      <defs>
        <linearGradient id="gw" x1="0" y1="0" x2="1" y2="1"><stop offset="0" stop-color="#fff" /><stop offset="1" stop-color="#ccd1da" /></linearGradient>
        <linearGradient id="gd" x1="0" y1="0" x2="0" y2="1"><stop offset="0" stop-color="#6f7789" /><stop offset="1" stop-color="#c4c9d2" /></linearGradient>
        <linearGradient id="gc"><stop offset="0" stop-color="#c8cdd6" /><stop offset=".4" stop-color="#fff" /><stop offset="1" stop-color="#b4bac5" /></linearGradient>
        <pattern id="ht" width="3" height="3" patternUnits="userSpaceOnUse"><rect width="3" height="3" fill="#d5d8dd" /><path d="M0 3L3 0" stroke="#6d7480" /></pattern>
        <pattern id="spl" width="48" height="48" patternUnits="userSpaceOnUse"><rect width="48" height="48" fill="#fff" /><path d="M4 6h3v3h-3zM20 12h3v3h-3zM36 4h3v3h-3zM12 26h3v3h-3zM30 30h3v3h-3zM43 21h3v3h-3zM6 40h3v3h-3zM24 42h3v3h-3zM40 38h3v3h-3z" fill="#555" /></pattern>
        <pattern id="spr" width="54" height="48" patternUnits="userSpaceOnUse"><rect width="54" height="48" fill="#ededed" /><path d="M8 9h3v3h-3zM28 4h3v3h-3zM45 18h3v3h-3zM16 24h3v3h-3zM34 33h3v3h-3zM6 38h3v3h-3zM48 42h3v3h-3z" fill="#555" /></pattern>
      </defs>
    </svg>

    <header class="titlebar">
      <div class="quick">
        <svg class="logo" viewBox="0 0 16 18" aria-label="Revit"><path d="M1 2l4-2v17l-4 1z" fill="#0c4a8e" /><path d="M5 1h5c5 0 6 7 1 9l5 8h-5L6 10V7h3c2 0 2-3 0-3H5z" fill="#2a7ad0" /><path d="M1 2l4-1h5l-3 3H1z" fill="#63a8ea" /><path d="M6 10l4 1 6 7h-5z" fill="#1b5aa8" /></svg>
        <template v-for="q in quick" :key="q.icon">
          <button class="qbtn" :aria-label="q.name"><svg viewBox="0 0 16 16" v-html="icons[q.icon]" /></button>
          <button v-if="q.menu" class="qmenu" :aria-label="q.name + ' メニュー'"><i class="tri" /></button>
          <i v-if="q.rule" class="rule" />
        </template>
        <button class="qmenu bar" aria-label="カスタマイズ"><i class="tri big" /></button>
      </div>
      <h1>Autodesk Revit 2021.1.1 - BSIビル新築工事2021.rvt - 3D ビュー: {3D}</h1>
      <div class="account">
        <i class="tri left" />
        <button class="qbtn" aria-label="検索"><svg viewBox="0 0 16 16" v-html="icons.binocular" /></button>
        <button class="user"><svg viewBox="0 0 16 16" v-html="icons.user" /><span>Nishimura0618</span><i class="tri" /></button>
        <button class="qbtn" aria-label="カート"><svg viewBox="0 0 16 16" v-html="icons.cart" /></button>
        <i class="rule" />
        <button class="qbtn" aria-label="ヘルプ"><svg viewBox="0 0 16 16" v-html="icons.help" /></button>
        <i class="tri helpmenu" />
      </div>
      <div class="wincontrols">
        <button aria-label="最小化"><svg viewBox="0 0 14 14"><path d="M3 11h8" stroke="#333" stroke-width="2" /></svg></button>
        <button aria-label="最大化"><svg viewBox="0 0 14 14"><path d="M1.500 2h11v10h-11z" fill="none" stroke="#333" stroke-width="1.300" /></svg></button>
        <button aria-label="閉じる"><svg viewBox="0 0 14 14"><path d="M2 2l10 10M12 2L2 12" stroke="#222" stroke-width="2.200" /></svg></button>
      </div>
    </header>

    <nav class="tabs">
      <button v-for="t in tabs" :key="t.t" :class="t.c">{{ t.t }}</button>
      <button class="collapse" aria-label="リボン最小化"><svg viewBox="0 0 26 12"><rect x="1" y="2" width="14" height="8" rx="2" fill="#f4f4f4" stroke="#333" /><path d="M5 8l3-3 3 3zM20 5h5l-2.500 3z" fill="#222" /></svg></button>
    </nav>

    <section class="ribbon">
      <div class="panel modify">
        <button class="tool on"><svg viewBox="0 0 32 32" v-html="icons.arrow" /><span>修正</span></button>
        <h2>選択 <i class="tri big" /></h2>
      </div>
      <div v-for="p in panels" :key="p.title" class="panel" :class="p.pad">
        <div class="tools">
          <button v-for="(t, i) in p.tools" :key="i" class="tool" :class="[t.size, { low: t.low, side: t.arrow === 'side' }]" :disabled="t.disabled">
            <svg viewBox="0 0 32 32" v-html="icons[t.icon]" />
            <span v-for="l in t.lines" :key="l" :class="{ tight: l.length > 3 }">{{ l }}</span>
            <i v-if="t.arrow" class="tri" />
          </button>
        </div>
        <h2>{{ p.title }} <i v-if="p.more" class="tri big" /></h2>
      </div>
    </section>
    <div class="options" />

    <main class="work">
      <aside class="browser">
        <div class="cap"><span>プロジェクト ブラウザ - BSIビル新築工事2021.rvt</span>
          <button aria-label="閉じる"><svg viewBox="0 0 12 12"><path d="M2 2l8 8M10 2l-8 8" stroke="#222" stroke-width="1.800" /></svg></button>
        </div>
        <div class="treebox">
          <ul class="tree" role="tree">
            <li v-for="(r, i) in rows" :key="i" role="treeitem">
              <span v-for="(c, k) in r.guides" :key="k" class="guide" :class="guideClass[c]">
                <button v-if="isBox(c)" class="box" :aria-label="r.text + ' 展開'"><svg viewBox="0 0 9 9"><path :d="c === 'p' || c === 'q' ? 'M2 4.500h5M4.500 2v5' : 'M2 4.500h5'" stroke="#2a4a9c" /></svg></button>
              </span>
              <svg v-if="r.icon" class="rowicon" viewBox="0 0 16 16" v-html="icons[r.icon]" />
              <span class="label" :class="{ selected: r.selected }">{{ r.text }}</span>
            </li>
          </ul>
          <div class="vscroll"><svg viewBox="0 0 10 10"><path d="M1 7l4-4 4 4" /></svg><i class="thumb" /><svg viewBox="0 0 10 10"><path d="M1 3l4 4 4-4" /></svg></div>
        </div>
        <div class="hscroll"><svg viewBox="0 0 10 10"><path d="M7 1L3 5l4 4" /></svg><i class="thumb" /><svg viewBox="0 0 10 10"><path d="M3 1l4 4-4 4" /></svg></div>
        <div class="ptabs"><button class="on">プロジェクト ブラウザ - BS...</button><button>プロパティ</button></div>
      </aside>

      <section class="view">
        <div class="vtabs">
          <div class="vtab"><svg viewBox="0 0 16 16" v-html="icons.home" /><span>{3D}</span>
            <button aria-label="ビューを閉じる"><svg viewBox="0 0 12 12"><path d="M2 2l8 8M10 2l-8 8" stroke="#111" stroke-width="1.800" /></svg></button>
          </div>
          <button class="qmenu bar" aria-label="ビュー一覧"><i class="tri big" /></button>
        </div>
        <div class="viewbody">
          <div class="canvas">
            <svg class="model" viewBox="285 200 1278 596" preserveAspectRatio="xMidYMid meet" role="img" aria-label="建物 3D モデル">
              <g stroke="none">
                <path d="M554 382L718 473V757L707 751 689 751 585 695 554 665z" fill="#a0a19a" />
                <path d="M718 473L1160 390V673L1120 693 1040 707 756 762 718 757z" fill="#8b8e86" />
                <path d="M554 382L695 357 737 380 1035 323 1160 390 718 473z" fill="#83867e" />
                <path d="M562 382L696 358 697 374 583 395z" fill="#8b8e86" />
                <path d="M1035 323L1160 390 1131 394 1035 339z" fill="#a0a19a" />
                <path d="M693 282L737 307V394L697 373 693 357z" fill="#a0a19a" />
                <path d="M693 282L995 226 1038 249 737 307z" fill="#8b8e86" />
                <path d="M737 307L1038 249V325L1034 339 737 394z" fill="#8b8e86" />
                <path d="M722 296L994 244 1011 254 738 304z" fill="#83867e" />
                <path d="M994 228L1033 249 1011 254 994 244z" fill="#a0a19a" />
              </g>
              <g class="ln" transform="translate(530 210) scale(.33333)">
                <path d="M73 517L490 440M95 517L495 445M73 517L565 786M95 518L160 553 343 655 480 731 568 783M565 786L1010 706M568 780L920 714 1010 699M500 445V489L620 553M345 522L465 585M360 518L475 580M305 635L690 565M325 641L700 573M480 585L520 622M490 597L535 622M465 726L820 657M480 733L845 665M700 595L905 717M712 590L930 714M680 545L965 711M655 555L720 587M790 605L1010 563M805 613L1010 575M905 675L1010 655M920 683L1010 664" />
                <path class="hv" d="M160 553L500 490M455 585L620 553L1010 481M343 657L530 622L1010 532" />
                <path d="M490 217V440M490 217L1010 121M510 220L1010 128M490 217L620 290V553M510 220L622 284M620 290L1010 214M622 284L1010 206M570 255L1010 172M955 183L1005 213M970 180L1010 206M490 265L620 333L1010 260M500 270V305L613 367V333" />
                <path class="dash" d="M633 370L1010 301" />
                <path d="M805 305L950 275 977 290V300L838 328 805 311zM805 305L838 318 977 290M838 318V328" fill="#83867e" />
                <path class="hv" d="M820 372L935 350V494L820 516z" fill="#fff" />
                <path class="hv" d="M878 362V505M829 383L868 376V430L829 437zM884 372L924 364V416L884 423z" fill="#9b9d9b" />
                <path d="M865 440l12-2M880 438l10-2M853 380v50" />
                <path d="M73 517V1360M565 786V1638M73 562L565 833M107 582V1385M532 817V1620M107 642L532 876M73 783L107 803M110 870L532 1102M532 1035L565 1054M73 1043L110 1065M530 1297L565 1315M110 1130L532 1363M110 1330L532 1563M165 1455L478 1625" />
                <path class="hv" d="M107 803L530 1036M110 1065L530 1297" />
                <path d="M565 833L1889 586M620 883L983 817M565 1054L1889 805M622 1108L983 1042M565 1315L1889 1067M622 1372L983 1305M622 1573L983 1507M619 824V1060M622 1060V1625M983 757V1557M677 1655L910 1612M1092 1575L1380 1522M1531 1492L1770 1448" />
                <path class="hv" d="M622 1045L983 977M622 1305L983 1237M1040 967L1438 892M1040 1227L1438 1153M1496 1141L1828 1079" />
              </g>
              <g class="ln" transform="translate(860 210) scale(.33333)">
                <path d="M20 121L405 48 535 118V340M20 128L403 55 520 118M403 55V102L452 131M535 118L20 214M520 118L20 206M20 172L403 102M10 175L50 207M22 172L68 203M20 260L535 165M125 240V460" />
                <path class="dash" d="M20 301L525 205" />
                <path d="M160 240L235 223 260 238V248L190 262 160 246zM160 240L190 252 260 238M190 252V262" fill="#83867e" />
                <path class="hv" d="M147 311L208 300V448L147 459z" fill="#fff" />
                <path d="M157 321L197 315V368L157 376zM160 367L195 360M195 380h12" class="hv" />
                <path class="hv" d="M20 481L108 464L505 388M20 532L590 425" />
                <path d="M20 563L205 528M20 575L215 540M108 464L405 628M145 460L440 622M245 525L595 457M250 537L610 466M240 540L300 573M20 655L345 592M20 664L360 598M370 588L730 520M378 594L740 526M505 388L800 555M555 432L605 467M635 463L795 553M525 340V388L815 552M525 340L899 540M535 342L885 538M20 699L405 628 815 553 885 538M20 706L899 540V1390" />
                <path d="M50 745V1550M448 672V1460M506 660V1465M845 595V812M838 812V1400M50 805L448 733M506 718L845 657M50 1030L448 957M506 945L838 883M50 1292L448 1219M506 1208L838 1146M50 1495L448 1420M506 1409L838 1347" />
              </g>
              <g v-for="(w, i) in glass" :key="'w' + i" class="ln" :transform="`translate(${w.x} ${w.y}) scale(.33333)`">
                <path d="M0 0L254-47V52L0 100z" :fill="w.base" />
                <path v-for="(n, k) in w.inner" :key="k" :d="n[0]" :fill="n[1]" stroke="none" />
                <path :d="w.lines" />
                <path d="M0 82L254 35V52L0 100z" fill="#000" />
                <path d="M4 88L250 42" class="sill" /><path d="M4 96L250 50" class="sill part" />
                <path class="bar" d="M61-11V76M124-23V64M187-35V53" />
                <path class="bar" d="M252-46V50" />
                <path class="hv" d="M0 100V0L254-47" />
              </g>
              <g v-for="(l, i) in ledges" :key="'l' + i" class="ln" :transform="`translate(${l[0]} ${l[1]}) scale(.33333)`">
                <path d="M0 0L279-55 292-50V-36L18 15 0 8zM0 0L18 5 292-48M18 5V15" fill="#8b8e86" />
              </g>
              <g class="ln" transform="translate(530 490) scale(.33333)">
                <path d="M442 256L509 293V392L442 355z" fill="#fff" />
                <path d="M442 256L457 264V358L442 352z" fill="#000" /><path class="bar" d="M482 278V378" /><path class="hv" d="M442 346L509 382M442 355L509 392M442 256L509 293" />
                <path d="M22 520L73 511V523L109 545 128 553 93 560z" fill="#dcdcdc" />
                <path d="M22 520L93 560V627L22 590z" fill="url(#spl)" /><path d="M93 560L128 553V595L165 615 93 627z" fill="url(#spr)" />
                <path d="M478 773L515 768 530 778 565 796 622 787 665 783 677 787 550 812z" fill="#dcdcdc" />
                <path d="M478 773L550 812V880L478 843z" fill="url(#spl)" /><path d="M550 812L677 787V857L550 880z" fill="url(#spr)" />
                <path d="M952 728L983 717 1040 708 1075 700 1091 708 968 733z" fill="#dcdcdc" />
                <path d="M910 772L950 765 952 728 968 733V802z" fill="#fff" /><path d="M968 733L1091 708V780L968 802z" fill="url(#spr)" />
                <path d="M1416 657L1437 632 1496 622 1531 647 1430 664z" fill="#fff" />
                <path d="M1378 685L1416 680V657L1430 664V712z" fill="#fff" /><path d="M1430 664L1531 647V692L1430 712z" fill="url(#spr)" />
                <path d="M1810 585L1828 560 1889 548 1925 573 1820 592z" fill="#fff" />
                <path d="M1770 608L1810 600V585L1820 592V637z" fill="#fff" /><path d="M1820 592L1925 573V620L1820 637z" fill="url(#spr)" />
              </g>
            </svg>

            <svg class="viewcube" viewBox="0 0 120 90" aria-label="ビューキューブ">
              <defs><radialGradient id="sh"><stop offset="0" stop-color="#777" stop-opacity=".8" /><stop offset="1" stop-color="#aaa" stop-opacity="0" /></radialGradient></defs>
              <ellipse cx="60" cy="60" rx="36" ry="16" fill="url(#sh)" />
              <g fill="none" stroke="#a9a9a9"><ellipse cx="60" cy="54" rx="55" ry="22" stroke-dasharray="7 1" /><ellipse cx="60" cy="54" rx="42" ry="15" stroke-dasharray="9 1" /></g>
              <path d="M5 61l5-2 2 4 5-4 4 5M6 65l6-3 7 2M79 66l8-2 3 6 8-5 4 4M82 72l7-3 9 2M93 38l8 2 4-3 7 3M95 43l12-3" stroke="#8f8f8f" fill="none" stroke-width="2" stroke-dasharray="2 1" />
              <path d="M32 8L67 3 87 12 51 19z" fill="#ececec" stroke="#999" stroke-dasharray="3 1" />
              <path d="M32 8L51 19V59L32 46z" fill="#e4e4e4" stroke="#999" /><path d="M51 19L87 12V50L51 59z" fill="#ececec" stroke="#999" />
              <path d="M55 12l14-3M59 8l4 4" stroke="#999" fill="none" />
              <text x="34" y="39" font-size="14">左</text><text x="58" y="43" font-size="22">前</text>
            </svg>
            <div class="navbar">
              <button aria-label="閉じる"><svg viewBox="0 0 10 10"><circle cx="5" cy="5" r="4.500" fill="#999" /><path d="M3 3l4 4M7 3L3 7" stroke="#eee" /></svg></button>
              <button class="wheel" aria-label="ホイール"><svg viewBox="0 0 24 24"><path d="M1 12C1 5 6 1 12 1h11v11c0 7-5 11-11 11S1 18 1 12z" fill="#dfe1e6" stroke="#8a8c92" stroke-width="1.500" /><circle cx="12" cy="12" r="6.500" fill="#eee" stroke="#999" /><path d="M7 17l-3 3M17 17l3 3" stroke="#999" /></svg></button>
              <i class="tri" /><hr />
              <button class="zoomer" aria-label="ズーム"><svg viewBox="0 0 18 18"><path d="M1 1h11v11H1z" fill="#a9c79a" stroke="#6d9e5e" /><circle cx="12" cy="12" r="3.500" fill="#eee" stroke="#777" /><path d="M14.500 14.500l3 3" stroke="#777" stroke-width="1.500" /></svg></button>
              <i class="tri" />
              <button class="last" aria-label="オプション"><svg viewBox="0 0 10 10"><circle cx="5" cy="5" r="4.500" fill="#999" /><path d="M2 4h6M3 6h4" stroke="#eee" /></svg></button>
            </div>
          </div>
          <div class="vscroll mid"><svg viewBox="0 0 10 10"><path d="M1 7l4-4 4 4" /></svg><i class="thumb" /><svg viewBox="0 0 10 10"><path d="M1 3l4 4 4-4" /></svg></div>
        </div>
        <div class="viewbar">
          <button class="scale">{{ scaleText }}</button>
          <button v-for="v in viewTools" :key="v" class="vt" :aria-label="v"><svg viewBox="0 0 16 16" v-html="icons[v]" /></button>
          <div class="hscroll wide"><svg viewBox="0 0 10 10"><path d="M7 1L3 5l4 4" /></svg><i class="thumb" /><svg viewBox="0 0 10 10"><path d="M3 1l4 4-4 4" /></svg></div>
          <svg class="grip" viewBox="0 0 9 9"><path d="M6 0h2v2H6zM3 3h2v2H3zM6 3h2v2H6zM0 6h2v2H0zM3 6h2v2H3zM6 6h2v2H6z" fill="#bbb" /></svg>
        </div>
      </section>
    </main>

    <footer class="status">
      <p>選択＝クリック、次へ＝[Tab]、追加＝[Ctrl]、選択解除＝[Shift]。</p>
      <svg class="si" viewBox="0 0 16 16" v-html="icons.workset" />
      <div class="drop"><select aria-label="ワークセット"><option></option></select><svg viewBox="0 0 10 10"><path d="M1 3l4 4 4-4" /></svg></div>
      <div class="count"><svg class="si" viewBox="0 0 16 16" v-html="icons.funnelgray" /><span>:0</span></div>
      <svg class="si gap" viewBox="0 0 16 16" v-html="icons.options" />
      <svg class="si" viewBox="0 0 16 16" v-html="icons.grayopt" />
      <div class="drop"><select aria-label="デザイン オプション"><option>メイン モデル</option></select><svg viewBox="0 0 10 10"><path d="M1 3l4 4 4-4" /></svg></div>
      <div class="sel">
        <button v-for="s in selectTools" :key="s" :aria-label="s"><svg viewBox="0 0 16 16" v-html="icons[s]" /></button>
        <button class="filter"><svg viewBox="0 0 16 16" v-html="icons.funnel" /><span>:0</span></button>
      </div>
    </footer>
  </div>
</template>

<style>
body { margin: 0; overflow: hidden; background: #ccc; }
</style>

<style scoped>
* { box-sizing: border-box; }
.app { display: flex; flex-direction: column; height: 100vh; background: #ccc; color: #333; font: 12px/15px "Open Sans", "Noto Sans CJK JP", sans-serif; font-feature-settings: "palt"; border-bottom: 2px solid #1488b8; }
.defs { position: absolute; width: 0; height: 0; }
button { font: inherit; font-feature-settings: inherit; color: inherit; background: none; border: 0; padding: 0; margin: 0; }
svg { display: block; flex: none; }
h1, h2, p { margin: 0; font-size: 12px; font-weight: 400; white-space: nowrap; }
.tri { display: inline-block; flex: none; width: 0; height: 0; border: 3px solid transparent; border-top: 3px solid #333; border-bottom: 0; }
.tri.big { border-width: 4px 4px 0; vertical-align: 2px; margin-left: 4px; }
.tri.left { border: 4px solid transparent; border-right-color: #333; border-left: 0; margin-right: 5px; }

.titlebar { display: flex; align-items: center; height: 34px; flex: none; padding: 0 8px; }
.quick { display: flex; align-items: center; width: 693px; flex: none; }
.logo { width: 16px; height: 18px; margin-right: 3px; }
.qbtn { width: 24px; height: 20px; display: flex; align-items: center; justify-content: center; flex: none; }
.qbtn svg { width: 16px; height: 16px; }
.qbtn:first-of-type { margin-right: 6px; }
.account .qbtn:first-of-type { margin-right: 0; }
.qmenu { width: 12px; height: 20px; flex: none; display: flex; align-items: center; justify-content: center; }
.qmenu .tri.big { margin: 0; }
.bar { flex-direction: column; gap: 2px; width: 20px; }
button.bar::before { content: ""; width: 8px; height: 1px; background: #222; }
.rule { width: 1px; height: 22px; background: #aaa; margin: 0 3px; flex: none; }
.titlebar h1 { height: 19px; font-size: 11px; }
.account { margin-left: auto; display: flex; align-items: center; }
.user { display: flex; align-items: center; gap: 5px; padding: 0 10px 0 4px; }
.user svg { width: 16px; height: 16px; }
.user span { font-size: 11px; }
.helpmenu { margin-left: 4px; }
.wincontrols { display: flex; gap: 11px; margin-left: 62px; }
.wincontrols svg { width: 14px; height: 14px; }

.tabs { display: flex; height: 20px; flex: none; padding-left: 4px; }
.tabs button { width: 44px; height: 20px; line-height: 18px; white-space: nowrap; flex: none; }
.tabs .file { width: 52px; background: #2a78ae; color: #fff; margin-right: 3px; }
.tabs .active { width: 42px; background: #eee; color: #111; }
.tabs .w74 { width: 74px; }
.tabs .w54 { width: 54px; }
.tight { font-size: 11px; }
.tabs .collapse { width: 26px; margin-left: 20px; padding-top: 4px; }
.collapse svg { width: 26px; height: 12px; }

.ribbon { display: flex; height: 95px; flex: none; margin: 0 2px 0 4px; background: #eee; }
.panel { display: flex; flex-direction: column; border-right: 1px solid #d4d4d4; flex: none; }
.panel:last-child { border: 0; }
.p2 { padding: 0 2px; } .p3 { padding: 0 3px; } .p4 { padding: 0 4px; }
.tools { display: flex; height: 74px; }
.panel h2 { height: 21px; line-height: 21px; text-align: center; }
.tool { position: relative; display: flex; flex-direction: column; align-items: center; padding-top: 6px; white-space: nowrap; height: 74px; flex: none; }
.tool svg { width: 32px; height: 32px; margin-bottom: 3px; }
.tool .tri { margin-top: 3px; }
.tool:disabled { color: #b4b4b4; }
.tool.low { padding-top: 10px; }
.tool.side .tri { position: absolute; right: 0; top: 54px; }
.s38 { width: 38px; } .s40 { width: 40px; } .s42 { width: 42px; } .s46 { width: 46px; } .s54 { width: 54px; } .s82 { width: 82px; }
.modify { width: 50px; padding: 3px 5px 0 6px; }
.modify .tool { width: 38px; height: 72px; padding-top: 3px; background: #b7d6f3; border: 1px solid #0a63c0; }
.modify h2 { margin-top: -1px; }
.options { height: 26px; flex: none; margin: 1px 1px 2px 3px; background: #eee; }

.work { display: flex; flex: 1; min-height: 0; }
.browser { width: 278px; margin-left: 3px; flex: none; display: flex; flex-direction: column; background: #eee; }
.cap { display: flex; justify-content: space-between; height: 20px; line-height: 20px; padding: 0 4px; white-space: nowrap; flex: none; font-size: 11px; }
.cap button, .vtab button { width: 12px; }
.cap button { padding-top: 2px; }
.cap svg { width: 12px; height: 12px; }
.treebox { display: flex; flex: 1; min-height: 0; margin: 0 2px; }
.tree { flex: 1; margin: 0; padding: 0; list-style: none; background: #fff; color: #000; overflow: hidden; }
.tree li { display: flex; height: 18px; line-height: 18px; white-space: nowrap; }
.guide { position: relative; width: 20px; flex: none; }
.guide.up::before { content: ""; position: absolute; left: 8px; top: 0; height: 10px; border-left: 1px dotted #888; }
.guide.up.down::before { height: 18px; }
.guide.down:not(.up)::before { content: ""; position: absolute; left: 8px; top: 10px; height: 8px; border-left: 1px dotted #888; }
.guide.out::after { content: ""; position: absolute; left: 9px; top: 10px; width: 14px; border-top: 1px dotted #888; }
.box { position: absolute; z-index: 1; left: 4px; top: 6px; width: 9px; height: 9px; background: #f6f6f6; outline: 1px solid #909090; outline-offset: -1px; }
.box svg { width: 9px; height: 9px; }
.rowicon { width: 16px; height: 16px; margin: 1px 0 0; background: #fff; position: relative; z-index: 1; }
.label { padding: 0 3px; margin-left: 3px; }
.label.selected { background: #e0e0e0; font-weight: 600; }
.vscroll { width: 15px; flex: none; background: #f0f0f0; display: flex; flex-direction: column; align-items: center; padding: 4px 0 3px; }
.vscroll svg, .hscroll svg { width: 9px; height: 9px; fill: none; stroke: #505050; stroke-width: 2; }
.vscroll .thumb { width: 15px; height: 128px; background: #cdcdcd; margin: 4px 0 auto; }
.vscroll.mid .thumb { height: 17px; margin: auto 0; }
.hscroll { display: flex; align-items: center; height: 15px; flex: none; margin: 0 21px 2px 6px; }
.hscroll .thumb { width: 176px; height: 15px; background: #cdcdcd; margin: 0 auto 0 4px; }
.ptabs { display: flex; height: 22px; flex: none; background: #ccc; font-size: 11px; }
.ptabs button { padding: 0 5px; color: #444; width: 88px; text-align: left; white-space: nowrap; flex: none; }
.ptabs .on { background: #eee; width: 140px; }

.view { flex: 1; min-width: 0; display: flex; flex-direction: column; margin: 0 1px 0 2px; }
.vtabs { display: flex; justify-content: space-between; height: 20px; flex: none; }
.vtab { display: flex; align-items: center; background: #fff; width: 128px; padding: 0 4px; gap: 8px; }
.vtab svg { width: 15px; height: 15px; }
.vtab button { margin-left: auto; }
.vtab button svg { width: 12px; height: 12px; }
.viewbody { display: flex; flex: 1; min-height: 0; border: 2px solid #fff; border-bottom: 0; gap: 2px; background: #fff; }
.canvas { position: relative; flex: 1; min-width: 0; background: linear-gradient(#f2f2f2, #a2a2a2); overflow: hidden; }
.model { position: absolute; inset: 0; width: 100%; height: 100%; }
.ln { stroke: #000; fill: none; stroke-width: 1; shape-rendering: crispEdges; }
.ln path { vector-effect: non-scaling-stroke; }
.ln .hv { stroke-width: 2; }
.ln .bar { stroke-width: 3; }
.ln .dash { stroke-dasharray: 2 4; }
.ln .sill { stroke: #fff; }
.ln .part { stroke-dasharray: 5 2; }
.viewcube { position: absolute; right: 15px; top: 46px; width: 120px; height: 90px; font-family: "Noto Sans CJK JP", sans-serif; font-weight: 500; fill: #888; }
.navbar { position: absolute; right: 0; top: 143px; width: 35px; height: 118px; border: 2px solid #a0a0a0; border-radius: 5px; background: #dcdcdc; display: flex; flex-direction: column; align-items: center; padding: 3px 4px; }
.navbar button:first-child, .navbar .last { align-self: flex-end; }
.navbar button svg { width: 8px; height: 8px; }
.navbar .wheel { margin: 9px 0 7px; }
.navbar .wheel svg { width: 22px; height: 22px; }
.navbar .zoomer svg { width: 17px; height: 17px; }
.navbar .zoomer { margin-bottom: 9px; }
.navbar hr { width: 100%; margin: 4px 0 7px; border: 0; border-top: 1px solid #aaa; }
.navbar .tri { border-top-color: #777; }
.navbar .last { margin-top: auto; }
.viewbar { display: flex; align-items: center; height: 19px; flex: none; background: #f0f0f0; border: 1px solid #fff; border-width: 0 2px 3px; }
.scale { width: 90px; padding-left: 6px; color: #000; font-family: "Liberation Sans", sans-serif; flex: none; }
.vt { width: 25px; display: flex; justify-content: center; flex: none; }
.vt svg { width: 15px; height: 15px; }
.hscroll.wide { flex: 1; margin: 0 10px 0 2px; }
.hscroll.wide .thumb { width: 17px; margin: 0 auto; }
.grip { width: 9px; height: 9px; margin-right: 2px; }

.status { display: flex; align-items: center; height: 26px; flex: none; padding: 0 20px 0 5px; color: #222; }
.status p { width: 537px; flex: none; }
.si { width: 16px; height: 16px; }
.drop { position: relative; width: 204px; height: 18px; margin-left: 8px; flex: none; }
.drop select { display: block; width: 100%; height: 18px; border: 0; background: #fff; appearance: none; font: inherit; font-size: 11px; line-height: 18px; padding: 0 4px; color: #888; }
.drop svg { position: absolute; right: 3px; top: 5px; width: 10px; height: 10px; fill: none; stroke: #999; }
.count { display: flex; align-items: center; gap: 3px; margin-left: 8px; width: 36px; }
.gap { margin: 0 10px 0 22px; }
.sel { display: flex; margin-left: auto; padding-right: 68px; }
.sel button { width: 26px; display: flex; justify-content: center; align-items: center; }
.sel svg { width: 16px; height: 16px; flex: none; }
.sel .filter { width: 34px; }
</style>
